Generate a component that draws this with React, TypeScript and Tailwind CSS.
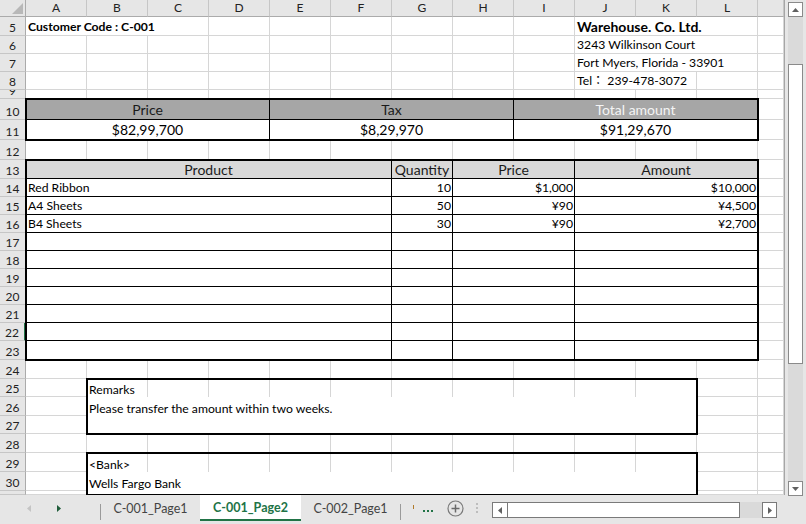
import React from 'react';

const RS = [
  'row-start-1','row-start-2','row-start-3','row-start-4','row-start-5','row-start-6','row-start-7',
  'row-start-8','row-start-9','row-start-10','row-start-11','row-start-12','row-start-13','row-start-14',
  'row-start-15','row-start-16','row-start-17','row-start-18','row-start-19','row-start-20','row-start-21',
  'row-start-22','row-start-23','row-start-24','row-start-25','row-start-26','row-start-27','row-start-28',
];
const CS = [
  'col-start-1','col-start-2','col-start-3','col-start-4','col-start-5','col-start-6','col-start-7',
  'col-start-8','col-start-9','col-start-10','col-start-11','col-start-12','col-start-13','col-start-14',
];
const LABELS = ['5','6','7','8','9','10','11','12','13','14','15','16','17','18','19','20','21','22','23','24','25','26','27','28','29','30',''];
const COLS = ['A','B','C','D','E','F','G','H','I','J','K','L',''];

const PRODUCTS: string[][] = [
  ['Red Ribbon', '10', '$1,000', '$10,000'],
  ['A4 Sheets', '50', '¥90', '¥4,500'],
  ['B4 Sheets', '30', '¥90', '¥2,700'],
  ['', '', '', ''],
  ['', '', '', ''],
  ['', '', '', ''],
  ['', '', '', ''],
  ['', '', '', ''],
  ['', '', '', ''],
  ['', '', '', ''],
];

function Sheet() {
  const items: React.ReactNode[] = [];
  items.push(
    <div key="corner" className="row-start-1 col-start-1 bg-[#e6e6e6] border-r border-b border-[#ababab] relative overflow-hidden">
      <svg className="absolute right-[2px] bottom-[2px]" width="11" height="11" viewBox="0 0 11 11">
        <polygon points="11,0 11,11 0,11" fill="#b8b8b8" />
      </svg>
    </div>
  );
  COLS.forEach((c, i) => {
    items.push(
      <div
        key={'ch' + i}
        className={`row-start-1 ${CS[i + 1]} bg-[#e6e6e6] border-r border-b border-r-[#c6c6c6] border-b-[#ababab] flex items-center justify-center text-[12px] leading-[14px] text-[#222]`}
      >
        {c}
      </div>
    );
  });
  LABELS.forEach((l, r) => {
    const sel = l === '22';
    items.push(
      <div
        key={'rh' + r}
        className={`${RS[r + 1]} col-start-1 bg-[#e6e6e6] border-b border-b-[#c6c6c6] ${sel ? 'border-r-2 border-r-[#217346]' : 'border-r border-r-[#ababab]'} flex items-end justify-center overflow-hidden text-[12px] leading-[15px] text-[#222]`}
      >
        {l}
      </div>
    );
    for (let c = 0; c < 13; c++) {
      items.push(
        <div key={'g' + r + '-' + c} className={`${RS[r + 1]} ${CS[c + 1]} border-r border-b border-[#d6d6d6]`} />
      );
    }
  });

  return (
    <div className="w-[785px] h-[495px] shrink-0 overflow-hidden border-r border-[#a6a6a6] bg-white grid grid-cols-[26px_repeat(12,61px)_26px] grid-rows-[17px_19px_18px_18px_18px_9px_21px_20px_20px_19px_18px_18px_18px_18px_18px_18px_18px_18px_18px_19px_19px_18px_19px_18px_19px_19px_19px_4px]">
      {items}

      <div className="row-start-2 col-start-2 col-span-3 bg-white mr-px mb-px flex items-end pl-[2px] pb-[1px] text-[12.2px] leading-[15px] font-bold whitespace-nowrap">
        Customer Code : C-001
      </div>
      <div className="row-start-2 col-start-11 col-span-3 bg-white mr-px mb-px flex items-end pl-[2px] pb-[0px] text-[14px] leading-[17px] font-bold whitespace-nowrap">
        Warehouse. Co. Ltd.
      </div>
      <div className="row-start-3 col-start-11 col-span-3 bg-white mr-px mb-px flex items-end pl-[2px] pb-[1px] text-[12.2px] leading-[15px] whitespace-nowrap">
        3243 Wilkinson Court
      </div>
      <div className="row-start-4 col-start-11 col-span-3 bg-white mr-px mb-px flex items-end pl-[2px] pb-[1px] text-[12.2px] leading-[15px] whitespace-nowrap">
        Fort Myers, Florida - 33901
      </div>
      <div className="row-start-5 col-start-11 col-span-2 bg-white mr-px mb-px flex items-end pl-[2px] pb-[1px] text-[12.2px] leading-[15px] whitespace-nowrap">
        Tel： 239-478-3072
      </div>

      <div className="row-start-7 row-span-2 col-start-2 col-span-12 grid grid-cols-3 grid-rows-[21px_20px] bg-white outline-2 outline-black -outline-offset-1">
        <div className="bg-[#a6a6a6] border-r border-b border-black flex items-end justify-center pb-[1px] text-[14px] leading-[17px] text-[#1a1a1a]">Price</div>
        <div className="bg-[#a6a6a6] border-r border-b border-black flex items-end justify-center pb-[1px] text-[14px] leading-[17px] text-[#1a1a1a]">Tax</div>
        <div className="bg-[#a6a6a6] border-r border-b border-black flex items-end justify-center pb-[1px] text-[14px] leading-[17px] text-[#f4f4f4]">Total amount</div>
        <div className="border-r border-b border-black flex items-end justify-center pb-[1px] text-[14px] leading-[17px]">$82,99,700</div>
        <div className="border-r border-b border-black flex items-end justify-center pb-[1px] text-[14px] leading-[17px]">$8,29,970</div>
        <div className="border-r border-b border-black flex items-end justify-center pb-[1px] text-[14px] leading-[17px]">$91,29,670</div>
      </div>

      <div className="row-start-10 row-span-11 col-start-2 col-span-12 grid grid-cols-[366px_61px_122px_183px] grid-rows-[19px_18px_18px_18px_18px_18px_18px_18px_18px_18px_19px] bg-white outline-2 outline-black -outline-offset-1">
        {['Product', 'Quantity', 'Price', 'Amount'].map((h) => (
          <div key={h} className="bg-[#d9d9d9] border-r border-b border-black flex items-center justify-center text-[14px] leading-[17px] text-[#1a1a1a]">
            {h}
          </div>
        ))}
        {PRODUCTS.map((row, ri) =>
          row.map((v, ci) => (
            <div
              key={ri + '-' + ci}
              className={`border-r border-b border-black flex items-center text-[12.2px] leading-[15px] whitespace-nowrap ${ci === 0 ? 'justify-start pl-[2px]' : 'justify-end pr-[1px]'}`}
            >
              {v}
            </div>
          ))
        )}
      </div>

      <div className="row-start-22 row-span-3 col-start-3 col-span-10 bg-white outline-2 outline-black -outline-offset-1 flex flex-col">
        <div className="h-[18px] grid grid-cols-10">
          {Array.from({ length: 10 }).map((_, i) => (
            <div key={i} className="border-r border-[#d6d6d6] flex items-end pl-[2px] text-[12.2px] leading-[15px] whitespace-nowrap">
              {i === 0 ? 'Remarks' : ''}
            </div>
          ))}
        </div>
        <div className="h-[19px] flex items-end pl-[2px] text-[12.2px] leading-[15px] whitespace-nowrap">
          Please transfer the amount within two weeks.
        </div>
        <div className="flex-1" />
      </div>

      <div className="row-start-26 row-span-3 col-start-3 col-span-10 bg-white outline-2 outline-black -outline-offset-1 flex flex-col">
        <div className="h-[19px] grid grid-cols-10">
          {Array.from({ length: 10 }).map((_, i) => (
            <div key={i} className="border-r border-[#d6d6d6] flex items-end pl-[2px] text-[12.2px] leading-[15px] whitespace-nowrap">
              {i === 0 ? '<Bank>' : ''}
            </div>
          ))}
        </div>
        <div className="h-[19px] flex items-end pl-[2px] text-[12.2px] leading-[15px] whitespace-nowrap">
          Wells Fargo Bank
        </div>
        <div className="flex-1" />
      </div>
    </div>
  );
}

function VScroll() {
  return (
    <div className="w-[21px] h-[497px] bg-[#e6e6e6] px-[3px] pt-[2px] shrink-0 relative z-10">
      <div className="h-[494px] bg-[#dadada] flex flex-col">
        <div className="h-[15px] bg-white border border-[#8a8a8a] flex items-center justify-center">
          <svg width="7" height="4" viewBox="0 0 7 4"><polygon points="0,4 7,4 3.5,0" fill="#606060" /></svg>
        </div>
        <div className="h-[47px]" />
        <div className="h-[300px] bg-white border border-[#8a8a8a]" />
        <div className="flex-1" />
        <div className="h-[15px] bg-white border border-[#8a8a8a] flex items-center justify-center">
          <svg width="7" height="4" viewBox="0 0 7 4"><polygon points="0,0 7,0 3.5,4" fill="#606060" /></svg>
        </div>
      </div>
    </div>
  );
}

function TabBar() {
  return (
    <div className="h-[29px] bg-[#e6e6e6] flex items-start text-[12.5px] leading-[15px]">
      <div className="w-[100px] h-[26px] flex items-center">
        <svg className="ml-[27px]" width="4" height="7" viewBox="0 0 4 7"><polygon points="4,0 4,7 0,3.5" fill="#c4c4c4" /></svg>
        <svg className="ml-[26px]" width="4" height="7" viewBox="0 0 4 7"><polygon points="0,0 0,7 4,3.5" fill="#1f5c3a" /></svg>
      </div>
      <div className="w-px h-[16px] mt-[9px] bg-[#9a9a9a]" />
      <div className="w-[99px] h-[26px] flex items-center justify-center text-[#444]">C-001_Page1</div>
      <div className="w-[101px] h-[26px] bg-white border-b-2 border-[#217346] flex items-center justify-center text-[#217346] font-bold">
        C-001_Page2
      </div>
      <div className="w-[99px] h-[26px] flex items-center justify-center text-[#444]">C-002_Page1</div>
      <div className="w-px h-[16px] mt-[9px] bg-[#9a9a9a]" />
      <div className="h-[26px] flex items-center">
        <div className="ml-[12px] w-px h-[4px] bg-[#b07a2a] mb-[2px]" />
        <div className="ml-[9px] flex gap-[2px] items-end h-[10px] pb-[1px]">
          <div className="w-[2px] h-[2px] bg-[#217346]" />
          <div className="w-[2px] h-[2px] bg-[#217346]" />
          <div className="w-[2px] h-[2px] bg-[#217346]" />
        </div>
        <svg className="ml-[14px]" width="17" height="17" viewBox="0 0 17 17">
          <circle cx="8.5" cy="8.5" r="7.5" fill="none" stroke="#7a7a7a" strokeWidth="1.2" />
          <line x1="4.5" y1="8.5" x2="12.5" y2="8.5" stroke="#6a6a6a" strokeWidth="1.5" />
          <line x1="8.5" y1="4.5" x2="8.5" y2="12.5" stroke="#6a6a6a" strokeWidth="1.5" />
        </svg>
        <div className="ml-[12px] flex flex-col gap-[2px]">
          <div className="w-[2px] h-[2px] bg-[#bdbdbd]" />
          <div className="w-[2px] h-[2px] bg-[#bdbdbd]" />
          <div className="w-[2px] h-[2px] bg-[#bdbdbd]" />
        </div>
      </div>
      <div className="ml-[14px] mt-[7px] w-[285px] h-[16px] flex">
        <div className="w-[16px] h-[16px] bg-white border border-[#7a7a7a] flex items-center justify-center">
          <svg width="4" height="7" viewBox="0 0 4 7"><polygon points="4,0 4,7 0,3.5" fill="#606060" /></svg>
        </div>
        <div className="w-[232px] h-[16px] bg-white border border-l-0 border-[#7a7a7a]" />
        <div className="flex-1 bg-[#dadada]" />
        <div className="w-[15px] h-[16px] bg-white border border-[#7a7a7a] flex items-center justify-center">
          <svg width="4" height="7" viewBox="0 0 4 7"><polygon points="0,0 0,7 4,3.5" fill="#606060" /></svg>
        </div>
      </div>
    </div>
  );
}

export default function App() {
  return (
    <div className="w-[806px] h-[524px] overflow-hidden bg-white font-['Lato','Noto_Sans_CJK_JP',sans-serif] text-black flex flex-col">
      <div className="flex h-[495px] overflow-visible">
        <Sheet />
        <VScroll />
      </div>
      <TabBar />
    </div>
  );
}
